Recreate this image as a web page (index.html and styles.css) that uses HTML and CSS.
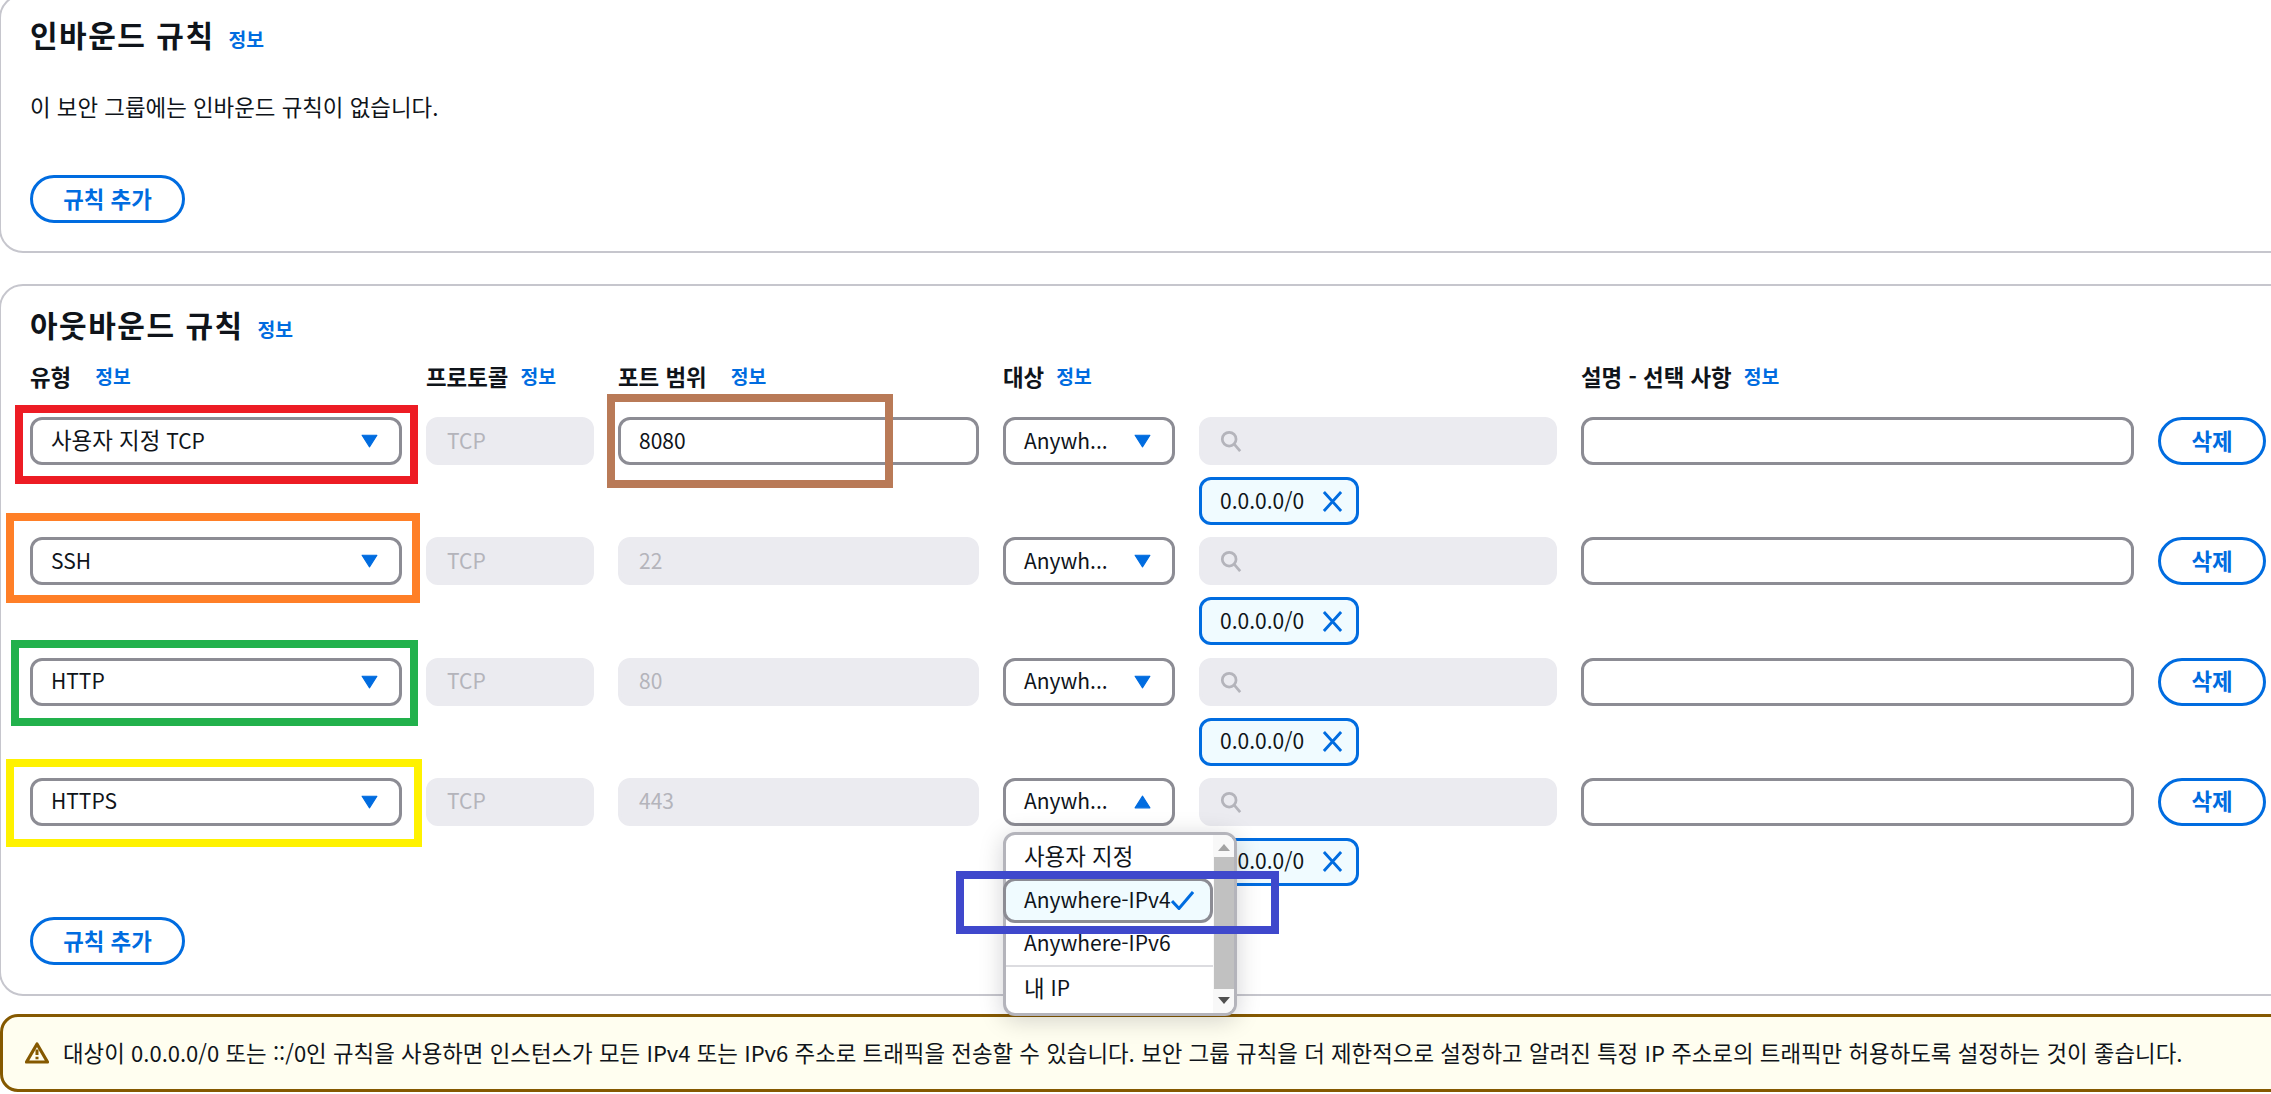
FILE: index.html
```html
<!DOCTYPE html>
<html lang="ko">
<head>
<meta charset="utf-8">
<title>보안 그룹 규칙</title>
<link rel="stylesheet" href="styles.css">
</head>
<body>
<main class="page">
  <section class="card card-inbound">
    <h2 class="title">인바운드 규칙 <a class="info info-title">정보</a></h2>
    <p class="empty">이 보안 그룹에는 인바운드 규칙이 없습니다.</p>
    <button class="btn btn-add">규칙 추가</button>
  </section>

  <section class="card card-outbound">
    <h2 class="title">아웃바운드 규칙 <a class="info info-title">정보</a></h2>
    <div class="rules">
      <div class="head"><b>유형</b><a class="info info-wide">정보</a></div>
      <div class="head"><b>프로토콜</b><a class="info">정보</a></div>
      <div class="head"><b>포트 범위</b><a class="info info-wide">정보</a></div>
      <div class="head"><b>대상</b><a class="info">정보</a></div>
      <div class="head"></div>
      <div class="head"><b>설명 - 선택 사항</b><a class="info">정보</a></div>
      <div class="head"></div>

      <div class="select"><span><span class="ko">사용자 지정</span> TCP</span><svg class="caret" viewBox="0 0 16 13"><path d="M1 1h14L8 12z"/></svg></div>
      <div class="field disabled">TCP</div>
      <div class="field">8080</div>
      <div class="select"><span>Anywh...</span><svg class="caret" viewBox="0 0 16 13"><path d="M1 1h14L8 12z"/></svg></div>
      <div class="cidr">
        <div class="field disabled"><svg class="search" viewBox="0 0 24 24"><circle cx="10" cy="10" r="7.5"/><path d="M15.5 15.5 22 23"/></svg></div>
        <div class="chip">0.0.0.0/0<svg class="x" viewBox="0 0 22 22"><path d="M2 1l18 20M20 1 2 21"/></svg></div>
      </div>
      <div class="field"></div>
      <button class="btn btn-del">삭제</button>

      <div class="select"><span>SSH</span><svg class="caret" viewBox="0 0 16 13"><path d="M1 1h14L8 12z"/></svg></div>
      <div class="field disabled">TCP</div>
      <div class="field disabled">22</div>
      <div class="select"><span>Anywh...</span><svg class="caret" viewBox="0 0 16 13"><path d="M1 1h14L8 12z"/></svg></div>
      <div class="cidr">
        <div class="field disabled"><svg class="search" viewBox="0 0 24 24"><circle cx="10" cy="10" r="7.5"/><path d="M15.5 15.5 22 23"/></svg></div>
        <div class="chip">0.0.0.0/0<svg class="x" viewBox="0 0 22 22"><path d="M2 1l18 20M20 1 2 21"/></svg></div>
      </div>
      <div class="field"></div>
      <button class="btn btn-del">삭제</button>

      <div class="select"><span>HTTP</span><svg class="caret" viewBox="0 0 16 13"><path d="M1 1h14L8 12z"/></svg></div>
      <div class="field disabled">TCP</div>
      <div class="field disabled">80</div>
      <div class="select"><span>Anywh...</span><svg class="caret" viewBox="0 0 16 13"><path d="M1 1h14L8 12z"/></svg></div>
      <div class="cidr">
        <div class="field disabled"><svg class="search" viewBox="0 0 24 24"><circle cx="10" cy="10" r="7.5"/><path d="M15.5 15.5 22 23"/></svg></div>
        <div class="chip">0.0.0.0/0<svg class="x" viewBox="0 0 22 22"><path d="M2 1l18 20M20 1 2 21"/></svg></div>
      </div>
      <div class="field"></div>
      <button class="btn btn-del">삭제</button>

      <div class="select"><span>HTTPS</span><svg class="caret" viewBox="0 0 16 13"><path d="M1 1h14L8 12z"/></svg></div>
      <div class="field disabled">TCP</div>
      <div class="field disabled">443</div>
      <div class="select select-open"><span>Anywh...</span><svg class="caret" viewBox="0 0 16 13"><path d="M1 12h14L8 1z"/></svg>
        <div class="menu">
          <div class="options">
            <div class="option"><span class="ko">사용자 지정</span></div>
            <div class="option option-selected">Anywhere-IPv4<svg class="check" viewBox="0 0 23 19"><path d="M1 10l7 7.5L22 1"/></svg></div>
            <div class="option">Anywhere-IPv6</div>
            <div class="option option-last"><span class="ko">내</span>&nbsp;IP</div>
          </div>
          <div class="scrollbar">
            <svg class="arrow" viewBox="0 0 12 8"><path d="M0 7h12L6 0z"/></svg>
            <div class="thumb"></div>
            <svg class="arrow arrow-down" viewBox="0 0 12 8"><path d="M0 1h12L6 8z"/></svg>
          </div>
        </div>
      </div>
      <div class="cidr">
        <div class="field disabled"><svg class="search" viewBox="0 0 24 24"><circle cx="10" cy="10" r="7.5"/><path d="M15.5 15.5 22 23"/></svg></div>
        <div class="chip">0.0.0.0/0<svg class="x" viewBox="0 0 22 22"><path d="M2 1l18 20M20 1 2 21"/></svg></div>
      </div>
      <div class="field"></div>
      <button class="btn btn-del">삭제</button>
    </div>
    <button class="btn btn-add btn-add-out">규칙 추가</button>
  </section>

  <section class="alert">
    <svg class="warn" viewBox="0 0 24 22"><path class="warn-tri" d="M12 2 22.5 20H1.5z"/><path class="warn-mark" d="M12 7.5v5.5M12 14.8v2.4"/></svg>
    <p>대상이 <span class="latin">0.0.0.0/0</span> 또는 <span class="latin">::/0</span>인 규칙을 사용하면 인스턴스가 모든 <span class="latin">IPv4</span> 또는 <span class="latin">IPv6</span> 주소로 트래픽을 전송할 수 있습니다. 보안 그룹 규칙을 더 제한적으로 설정하고 알려진 특정 <span class="latin">IP</span> 주소로의 트래픽만 허용하도록 설정하는 것이 좋습니다.</p>
  </section>
</main>

<div class="frame frame-red"></div>
<div class="frame frame-orange"></div>
<div class="frame frame-green"></div>
<div class="frame frame-yellow"></div>
<div class="frame frame-brown"></div>
<div class="frame frame-blue"></div>
</body>
</html>
```
FILE: styles.css
```css
* { box-sizing: border-box; }
html, body { margin: 0; height: 1094px; overflow: hidden; background: #fff; }
body {
  position: relative;
  font-family: "Noto Sans CJK KR", "Open Sans", sans-serif;
  font-size: 21px;
  line-height: 30px;
  color: #0f141a;
}
.ko { font-size: 22.4px; }
.page { display: flex; flex-direction: column; width: 2300px; margin-left: -1px; margin-top: -6px; }
.card { border: 2px solid #c6c6cd; border-radius: 24px; background: #fff; padding: 0 0 0 29px; }
.card-inbound { height: 259px; }
.card-outbound { height: 712px; margin-top: 31px; }
.title { margin: 0; padding-top: 18px; font-size: 30px; letter-spacing: 1.5px; line-height: 40px; font-weight: 700; }
.info { color: #006ce0; font-size: 19.3px; font-weight: 700; letter-spacing: 0; margin-left: 12px; line-height: 24px; }
.info-title { margin-left: 4px; }
.info-wide { margin-left: 24px; }
.empty { margin: 37px 0 0; font-size: 22.4px; line-height: 30px; }
.btn { font: inherit; font-size: 22.4px; font-weight: 700; color: #006ce0; background: #fff; border: 3px solid #006ce0; border-radius: 30px; padding: 0 0 3px; height: 48px; }
.btn-add { display: block; width: 155px; margin-top: 54px; }
.btn-add-out { margin-top: 0; }
.rules {
  display: grid;
  grid-template-columns: 372px 168px 361px 172px 358px 553px 108px;
  column-gap: 24px;
  grid-template-rows: 30px repeat(4, 120.3px);
  width: 2240px;
  height: 556px;
  margin-top: 17px;
  align-items: start;
}
.head { display: flex; align-items: center; height: 30px; white-space: nowrap; }
.head b { font-size: 22.4px; font-weight: 700; }
.select, .field {
  display: flex;
  align-items: center;
  height: 48px;
  border: 3px solid #8c8c94;
  border-radius: 12px;
  padding: 0 18px 3px;
  background: #fff;
  margin-top: 26px;
}
.select { justify-content: space-between; position: relative; padding-right: 21px; }
.disabled { background: #ebebf0; border-color: #ebebf0; color: #b4b4bb; }
.search { width: 22px; height: 22px; margin-top: 3px; fill: none; stroke: #b4b4bb; stroke-width: 3; }
.chip {
  display: flex;
  align-items: center;
  justify-content: space-between;
  width: 160px;
  height: 48px;
  margin-top: 12px;
  padding: 0 13px 3px 18px;
  border: 3px solid #006ce0;
  border-radius: 12px;
  background: #f0fbff;
}
.x { width: 21px; height: 21px; margin-top: 3px; fill: none; stroke: #006ce0; stroke-width: 3; }
.caret { width: 17px; height: 14px; margin-top: 3px; fill: #006ce0; stroke: #006ce0; stroke-width: 1; stroke-linejoin: round; flex: none; }
.btn-del { margin-top: 26px; width: 108px; }
.menu {
  position: absolute;
  z-index: 2;
  left: -3px;
  top: 51px;
  width: 234px;
  height: 184px;
  display: flex;
  background: #fff;
  border: 3px solid #b4b4bb;
  border-radius: 12px;
  box-shadow: 0 4px 24px rgba(0, 7, 22, 0.18);
}
.options { width: 207px; flex: none; }
.option { height: 44px; padding: 0 18px 3px; display: flex; align-items: center; border-bottom: 2px solid #dcdce0; white-space: nowrap; }
.option:first-child { height: 43px; border-bottom: 0; }
.option-selected {
  height: 45px;
  width: 210px;
  margin-left: -3px;
  background: #f0fbff;
  border: 3px solid #8c8c94;
  border-radius: 12px;
  position: relative;
  z-index: 1;
}
.option-last { border-bottom: 0; }
.check { width: 23px; height: 19px; margin-top: 3px; fill: none; stroke: #006ce0; stroke-width: 3; flex: none; }
.scrollbar { flex: 1; display: flex; flex-direction: column; align-items: center; background: #f8f8f8; padding-top: 9px; border-radius: 0 9px 9px 0; }
.arrow { width: 12px; height: 8px; fill: #a3a3a3; flex: none; }
.arrow-down { fill: #505050; margin-top: 7px; }
.thumb { width: 20px; height: 132px; margin-top: 5px; background: #c1c1c1; flex: none; }
.alert {
  display: flex;
  align-items: center;
  gap: 14px;
  height: 78px;
  margin-top: 18px;
  margin-left: 1px;
  padding-left: 22px;
  background: #fffef0;
  border: 3px solid #855900;
  border-radius: 18px;
}
.alert p { margin: 0 0 3px; white-space: nowrap; font-size: 22.4px; }
.latin { font-size: 22px; }
.warn { width: 24px; height: 22px; flex: none; fill: none; stroke: #855900; }
.warn-tri { stroke-width: 3.2; stroke-linejoin: round; }
.warn-mark { stroke-width: 3; }
.frame { position: absolute; border: 8px solid; z-index: 5; pointer-events: none; }
.frame-red { left: 15px; top: 405px; width: 403px; height: 79px; border-color: #ed1c24; }
.frame-orange { left: 6px; top: 513px; width: 414px; height: 90px; border-color: #ff7f27; }
.frame-green { left: 11px; top: 640px; width: 407px; height: 86px; border-color: #22b14c; }
.frame-yellow { left: 6px; top: 759px; width: 416px; height: 88px; border-color: #fff200; }
.frame-brown { left: 607px; top: 394px; width: 286px; height: 94px; border-color: #b97a57; }
.frame-blue { left: 956px; top: 871px; width: 323px; height: 63px; border-color: #3f48cc; }
```
